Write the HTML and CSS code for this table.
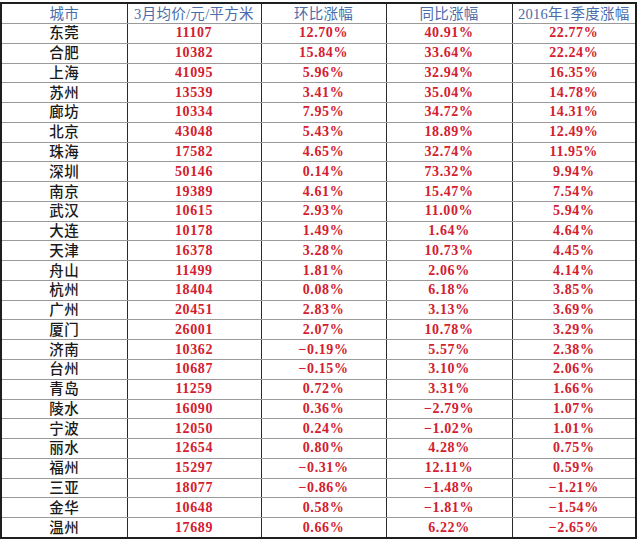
FILE: index.html
```html
<!DOCTYPE html>
<html lang="zh-CN">
<head>
<meta charset="utf-8">
<title>3月房价</title>
<link rel="stylesheet" href="styles.css">
</head>
<body>
<table class="price-table">
  <colgroup>
    <col class="c1"><col class="c2"><col class="c3"><col class="c4"><col class="c5">
  </colgroup>
  <thead>
    <tr class="head-row">
      <th>城市</th><th>3月均价/元/平方米</th><th>环比涨幅</th><th>同比涨幅</th><th>2016年1季度涨幅</th>
    </tr>
  </thead>
  <tbody>
    <tr><td class="city">东莞</td><td>11107</td><td>12.70%</td><td>40.91%</td><td>22.77%</td></tr>
    <tr><td class="city">合肥</td><td>10382</td><td>15.84%</td><td>33.64%</td><td>22.24%</td></tr>
    <tr><td class="city">上海</td><td>41095</td><td>5.96%</td><td>32.94%</td><td>16.35%</td></tr>
    <tr><td class="city">苏州</td><td>13539</td><td>3.41%</td><td>35.04%</td><td>14.78%</td></tr>
    <tr><td class="city">廊坊</td><td>10334</td><td>7.95%</td><td>34.72%</td><td>14.31%</td></tr>
    <tr><td class="city">北京</td><td>43048</td><td>5.43%</td><td>18.89%</td><td>12.49%</td></tr>
    <tr><td class="city">珠海</td><td>17582</td><td>4.65%</td><td>32.74%</td><td>11.95%</td></tr>
    <tr><td class="city">深圳</td><td>50146</td><td>0.14%</td><td>73.32%</td><td>9.94%</td></tr>
    <tr><td class="city">南京</td><td>19389</td><td>4.61%</td><td>15.47%</td><td>7.54%</td></tr>
    <tr><td class="city">武汉</td><td>10615</td><td>2.93%</td><td>11.00%</td><td>5.94%</td></tr>
    <tr><td class="city">大连</td><td>10178</td><td>1.49%</td><td>1.64%</td><td>4.64%</td></tr>
    <tr><td class="city">天津</td><td>16378</td><td>3.28%</td><td>10.73%</td><td>4.45%</td></tr>
    <tr><td class="city">舟山</td><td>11499</td><td>1.81%</td><td>2.06%</td><td>4.14%</td></tr>
    <tr><td class="city">杭州</td><td>18404</td><td>0.08%</td><td>6.18%</td><td>3.85%</td></tr>
    <tr><td class="city">广州</td><td>20451</td><td>2.83%</td><td>3.13%</td><td>3.69%</td></tr>
    <tr><td class="city">厦门</td><td>26001</td><td>2.07%</td><td>10.78%</td><td>3.29%</td></tr>
    <tr><td class="city">济南</td><td>10362</td><td>−0.19%</td><td>5.57%</td><td>2.38%</td></tr>
    <tr><td class="city">台州</td><td>10687</td><td>−0.15%</td><td>3.10%</td><td>2.06%</td></tr>
    <tr><td class="city">青岛</td><td>11259</td><td>0.72%</td><td>3.31%</td><td>1.66%</td></tr>
    <tr><td class="city">陵水</td><td>16090</td><td>0.36%</td><td>−2.79%</td><td>1.07%</td></tr>
    <tr><td class="city">宁波</td><td>12050</td><td>0.24%</td><td>−1.02%</td><td>1.01%</td></tr>
    <tr><td class="city">丽水</td><td>12654</td><td>0.80%</td><td>4.28%</td><td>0.75%</td></tr>
    <tr><td class="city">福州</td><td>15297</td><td>−0.31%</td><td>12.11%</td><td>0.59%</td></tr>
    <tr><td class="city">三亚</td><td>18077</td><td>−0.86%</td><td>−1.48%</td><td>−1.21%</td></tr>
    <tr><td class="city">金华</td><td>10648</td><td>0.58%</td><td>−1.81%</td><td>−1.54%</td></tr>
    <tr><td class="city">温州</td><td>17689</td><td>0.66%</td><td>6.22%</td><td>−2.65%</td></tr>
  </tbody>
</table>
</body>
</html>
```

FILE: styles.css
```css
html, body {
  margin: 0;
  padding: 0;
  background: #ffffff;
}

body {
  padding-top: 2px;
}

.price-table {
  border-collapse: collapse;
  table-layout: fixed;
  width: 637px;
  border: 2px solid #1e1e1e;
  font-family: "Liberation Serif", "Noto Sans CJK SC", serif;
}

.c1 { width: 126px; }
.c2 { width: 134px; }
.c3 { width: 125px; }
.c4 { width: 126px; }
.c5 { width: 124px; }

.price-table th,
.price-table td {
  padding: 0;
  text-align: center;
  vertical-align: middle;
  border-left: 1px solid #2a2a2a;
  border-right: 1px solid #2a2a2a;
  border-top: 1px solid #9a9a9a;
  border-bottom: 1px solid #9a9a9a;
  white-space: nowrap;
  overflow: hidden;
  line-height: 16px;
}

.head-row th {
  height: 19px;
  font-size: 14.5px;
  font-weight: normal;
  color: #4a6cab;
  letter-spacing: 0.3px;
}

.price-table td {
  height: 18.77px;
  font-size: 14px;
  font-weight: bold;
  color: #d2202f;
  letter-spacing: 0.6px;
}

.price-table td.city {
  color: #1a1a1a;
  font-size: 14.5px;
  font-weight: 500;
  letter-spacing: 0.5px;
}
```
